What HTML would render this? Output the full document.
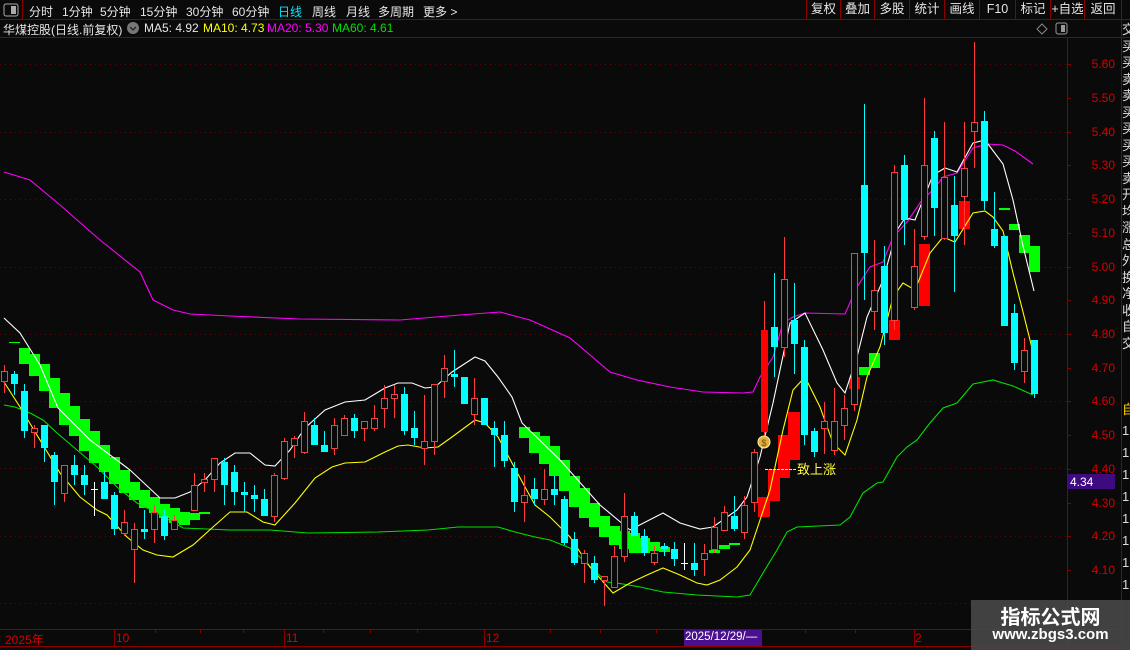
<!DOCTYPE html>
<html><head><meta charset="utf-8"><style>
*{margin:0;padding:0;box-sizing:border-box}
body{width:1130px;height:650px;background:#0a0a0a;overflow:hidden;position:relative;font-family:"Liberation Sans","Noto Sans CJK SC",sans-serif;color:#e6e6e6;font-size:12px}
.a{position:absolute;white-space:nowrap}
.top span{position:absolute;top:3px}
.btn{position:absolute;top:0;height:19px;border-left:1px solid #8a0000;text-align:center;line-height:19px;font-size:12.5px}
.ax{position:absolute;right:15px;color:#d40000;font-size:12px}
.rs{position:absolute;left:1122px;width:8px;overflow:hidden;font-size:13px;line-height:16.5px;color:#ddd}
</style></head><body>
<svg class="a" style="left:0;top:0" width="1130" height="650">
<!-- grid -->
<g stroke="#6a0000" stroke-dasharray="1,4" stroke-width="1">
<path d="M0 64.5H1067M0 132.5H1067M0 199.5H1067M0 267.5H1067M0 334.5H1067M0 401.5H1067M0 468.5H1067M0 536.5H1067M0 603.5H1067"/>
</g>
<!-- frame lines -->
<g stroke="#8a0000" stroke-width="1" fill="none">
<path d="M0 19.5H1130M0 37.5H1130M1067.5 37V646M1121.5 19V646M0 629.5H1121M0 646.5H1130M22.5 0V19"/>
<path d="M1067 64.5h4M1067 98.5h4M1067 132.5h4M1067 165.5h4M1067 199.5h4M1067 233.5h4M1067 267.5h4M1067 300.5h4M1067 334.5h4M1067 368.5h4M1067 401.5h4M1067 435.5h4M1067 469.5h4M1067 503.5h4M1067 536.5h4M1067 570.5h4"/>
<path d="M114.5 630v16M284.5 630v16M484.5 630v16M914.5 630v16M155.5 630v3M200.5 630v3M243.5 630v3M323.5 630v3M370.5 630v3M417.5 630v3M550.5 630v3M600.5 630v3M656.5 630v3M805.5 630v3M855.5 630v3M1000.5 630v3"/>
</g>
<!-- green band 1 -->
<g fill="#00ff00">
<rect x="19" y="348" width="11" height="16"/><rect x="29" y="354" width="11" height="22"/><rect x="39" y="364" width="11" height="27"/><rect x="49" y="378" width="11" height="30"/><rect x="59" y="393" width="11" height="32"/><rect x="69" y="406" width="11" height="30"/><rect x="79" y="419" width="11" height="32"/><rect x="89" y="431" width="11" height="32"/><rect x="99" y="445" width="11" height="27"/><rect x="109" y="457" width="11" height="27"/><rect x="119" y="470" width="11" height="23"/><rect x="129" y="482" width="11" height="18"/><rect x="139" y="490" width="11" height="18"/><rect x="149" y="497" width="11" height="16"/><rect x="159" y="504" width="11" height="14"/><rect x="169" y="508" width="11" height="15"/><rect x="179" y="512" width="11" height="13"/><rect x="189" y="513" width="11" height="7"/><rect x="199" y="512" width="11" height="2"/>
<rect x="9" y="342" width="11" height="1"/>
<!-- band 2 -->
<rect x="519" y="427" width="11" height="11"/><rect x="529" y="432" width="11" height="21"/><rect x="539" y="436" width="11" height="28"/><rect x="549" y="446" width="11" height="30"/><rect x="559" y="460" width="11" height="31"/><rect x="569" y="476" width="11" height="31"/><rect x="579" y="488" width="11" height="30"/><rect x="589" y="503" width="11" height="24"/><rect x="599" y="516" width="11" height="21"/><rect x="609" y="526" width="11" height="19"/><rect x="619" y="531" width="11" height="18"/><rect x="629" y="533" width="11" height="20"/><rect x="639" y="538" width="11" height="15"/><rect x="649" y="542" width="11" height="9"/><rect x="659" y="547" width="11" height="5"/>
<rect x="709" y="550" width="11" height="3"/><rect x="719" y="545" width="11" height="4"/><rect x="729" y="543" width="11" height="2"/>
<rect x="859" y="367" width="11" height="8"/><rect x="869" y="353" width="11" height="15"/>
<rect x="999" y="208" width="11" height="2"/><rect x="1009" y="224" width="11" height="6"/><rect x="1019" y="235" width="11" height="18"/><rect x="1029" y="246" width="11" height="26"/>
</g>
<!-- red blocks -->
<g fill="#ff0000">
<rect x="758" y="497" width="12" height="20"/><rect x="768" y="469" width="12" height="32"/><rect x="778" y="435" width="12" height="43"/><rect x="788" y="412" width="12" height="48"/><rect x="849" y="377" width="11" height="12"/><rect x="889" y="320" width="11" height="20"/><rect x="919" y="244" width="11" height="62"/><rect x="959" y="201" width="11" height="28"/>
</g>
<!-- MA lines -->
<g fill="none" stroke-width="1.1">
<polyline stroke="#ff00ff" points="4,172 30,180 60,205 100,240 140,272 153,300 173,310 190,314 230,316 300,319 400,320 460,315 500,312 530,320 570,338 610,372 637,380 670,387 703,392 743,393 753,392 760,377 773,357 783,323 793,317 805,313 845,314 857,287 870,267 883,262 893,237 907,222 922,200 933,190 943,177 957,173 973,148 987,144 1003,145 1015,151 1033,164"/>
<polyline stroke="#00e000" points="4,405 15,407 30,413 43,420 57,433 77,450 97,467 117,487 137,503 157,513 183,528 230,530 270,530 308,533 378,532 428,530 458,527 498,527 515,532 535,537 550,540 570,548 583,560 597,573 607,582 623,584 640,587 663,592 697,595 737,597 750,595 763,573 777,550 787,532 797,527 840,525 850,517 863,493 877,483 883,482 897,457 907,447 917,440 930,423 943,408 957,403 973,384 993,380 1013,386 1033,395"/>
<polyline stroke="#ffff00" points="4,382 20,407 40,440 60,473 80,497 97,510 107,515 127,537 143,550 157,555 173,557 193,545 213,527 230,512 247,512 263,522 275,525 295,503 315,478 332,467 345,463 365,462 385,452 398,446 408,445 425,448 438,447 452,437 475,420 485,423 498,437 512,463 525,487 535,505 550,517 570,537 590,567 613,593 630,583 647,575 663,568 680,575 697,583 707,585 720,580 737,567 750,550 760,520 770,490 783,430 793,390 805,377 820,407 833,443 845,455 857,420 867,377 880,347 893,297 903,283 915,290 930,253 943,237 955,242 973,213 985,211 993,217 1003,231 1013,273 1023,312 1034,356"/>
<polyline stroke="#ffffff" points="4,318 20,333 40,365 58,408 90,440 130,470 160,498 175,498 190,492 205,480 220,463 235,453 250,453 265,465 275,466 290,450 305,428 325,410 345,402 365,400 385,388 398,383 412,383 425,388 435,387 452,372 475,357 485,361 498,377 512,397 522,423 560,460 600,505 630,530 663,513 680,523 700,529 713,527 737,510 747,497 760,457 773,403 790,323 805,313 823,350 837,383 845,393 857,357 867,317 883,280 897,230 905,218 915,220 933,175 945,168 957,172 973,143 985,140 1003,164 1013,200 1023,246 1034,291"/>
</g>
<!-- wicks -->
<path stroke="#ff3b3b" stroke-width="1" d="M4.5 365V393M34.5 425V448M64.5 465V502M124.5 510V536M134.5 523V583M154.5 505V543M174.5 515V530M194.5 473V510M204.5 473V492M214.5 458V492M274.5 473V522M284.5 438V480M294.5 436V458M304.5 412V454M334.5 418V455M344.5 415V435M364.5 421V441M374.5 405V431M384.5 385V428M394.5 385V418M424.5 395V465M434.5 384V455M444.5 355V398M474.5 378V425M524.5 475V522M544.5 469V505M584.5 550V583M604.5 576V606M614.5 546V587M624.5 493V562M654.5 546V565M704.5 544V576M714.5 517V553M724.5 506V531M744.5 496V539M754.5 449V512M764.5 301V442M784.5 237V357M824.5 402V454M834.5 388V455M844.5 395V440M854.5 253V411M874.5 240V330M894.5 165V330M914.5 229V310M924.5 98V240M944.5 122V240M964.5 122V245M974.5 42V168M1024.5 338V383"/>
<path stroke="#00ffff" stroke-width="1" d="M14.5 371V395M24.5 384V438M44.5 425V462M54.5 452V505M74.5 455V485M84.5 465V495M104.5 471V499M114.5 492V535M144.5 510V539M164.5 510V540M224.5 458V505M234.5 465V505M244.5 482V512M254.5 485V512M264.5 489V516M314.5 418V445M324.5 431V452M354.5 414V438M404.5 387V435M414.5 411V445M454.5 350V387M494.5 421V467M504.5 421V467M514.5 462V512M534.5 478V505M554.5 476V505M564.5 496V545M574.5 532V565M594.5 556V583M634.5 512V536M644.5 529V556M664.5 543V556M674.5 542V566M694.5 543V576M734.5 496V531M774.5 273V377M794.5 283V374M804.5 340V445M814.5 428V457M864.5 104V300M884.5 246V345M904.5 155V245M934.5 131V236M954.5 176V292M984.5 111V210M994.5 192V248M1014.5 304V370M1034.5 340V398"/>
<path stroke="#ffffff" stroke-width="1" d="M94.5 482V516M91 489.5h7M684.5 543V570M681 563.5h7"/>
<!-- cyan bodies -->
<g fill="#00ffff">
<rect x="11" y="374" width="7" height="10"/><rect x="21" y="391" width="7" height="40"/><rect x="41" y="425" width="7" height="23"/><rect x="51" y="455" width="7" height="27"/><rect x="71" y="465" width="7" height="10"/><rect x="81" y="475" width="7" height="10"/><rect x="101" y="482" width="7" height="17"/><rect x="111" y="495" width="7" height="34"/><rect x="141" y="529" width="7" height="3"/><rect x="161" y="516" width="7" height="20"/><rect x="221" y="462" width="7" height="23"/><rect x="231" y="472" width="7" height="20"/><rect x="241" y="492" width="7" height="3"/><rect x="251" y="495" width="7" height="4"/><rect x="261" y="499" width="7" height="17"/><rect x="311" y="425" width="7" height="20"/><rect x="321" y="445" width="7" height="7"/><rect x="351" y="418" width="7" height="13"/><rect x="401" y="394" width="7" height="37"/><rect x="411" y="428" width="7" height="10"/><rect x="451" y="374" width="7" height="3"/><rect x="461" y="377" width="7" height="27"/><rect x="481" y="398" width="7" height="27"/><rect x="491" y="428" width="7" height="7"/><rect x="501" y="435" width="7" height="26"/><rect x="511" y="468" width="7" height="34"/><rect x="531" y="489" width="7" height="10"/><rect x="551" y="489" width="7" height="6"/><rect x="561" y="499" width="7" height="44"/><rect x="571" y="539" width="7" height="24"/><rect x="591" y="563" width="7" height="17"/><rect x="631" y="516" width="7" height="20"/><rect x="641" y="536" width="7" height="17"/><rect x="661" y="546" width="7" height="3"/><rect x="671" y="549" width="7" height="10"/><rect x="691" y="563" width="7" height="7"/><rect x="731" y="516" width="7" height="13"/><rect x="771" y="327" width="7" height="20"/><rect x="791" y="320" width="7" height="24"/><rect x="801" y="347" width="7" height="88"/><rect x="811" y="431" width="7" height="21"/><rect x="861" y="185" width="7" height="68"/><rect x="881" y="266" width="7" height="67"/><rect x="901" y="165" width="7" height="55"/><rect x="931" y="138" width="7" height="70"/><rect x="951" y="205" width="7" height="31"/><rect x="981" y="121" width="7" height="80"/><rect x="991" y="229" width="7" height="17"/><rect x="1001" y="236" width="7" height="90"/><rect x="1011" y="313" width="7" height="50"/><rect x="1031" y="340" width="7" height="54"/>
</g>
<!-- red hollow bodies -->
<g fill="#0a0a0a" stroke="#ff3b3b" stroke-width="1">
<rect x="1.5" y="371.5" width="6" height="10"/><rect x="31.5" y="428.5" width="6" height="4"/><rect x="61.5" y="465.5" width="6" height="28"/><rect x="121.5" y="522.5" width="6" height="11"/><rect x="131.5" y="529.5" width="6" height="20"/><rect x="151.5" y="512.5" width="6" height="17"/><rect x="171.5" y="520.5" width="6" height="9"/><rect x="191.5" y="485.5" width="6" height="25"/><rect x="201.5" y="479.5" width="6" height="3"/><rect x="211.5" y="458.5" width="6" height="21"/><rect x="271.5" y="475.5" width="6" height="41"/><rect x="281.5" y="441.5" width="6" height="37"/><rect x="291.5" y="438.5" width="6" height="7"/><rect x="301.5" y="421.5" width="6" height="31"/><rect x="331.5" y="425.5" width="6" height="23"/><rect x="341.5" y="418.5" width="6" height="17"/><rect x="361.5" y="421.5" width="6" height="7"/><rect x="371.5" y="418.5" width="6" height="10"/><rect x="381.5" y="398.5" width="6" height="10"/><rect x="391.5" y="394.5" width="6" height="4"/><rect x="421.5" y="441.5" width="6" height="7"/><rect x="431.5" y="384.5" width="6" height="57"/><rect x="441.5" y="368.5" width="6" height="13"/><rect x="471.5" y="398.5" width="6" height="16"/><rect x="521.5" y="495.5" width="6" height="7"/><rect x="541.5" y="489.5" width="6" height="10"/><rect x="581.5" y="553.5" width="6" height="10"/><rect x="601.5" y="576.5" width="6" height="4"/><rect x="611.5" y="556.5" width="6" height="31"/><rect x="621.5" y="516.5" width="6" height="40"/><rect x="651.5" y="553.5" width="6" height="9"/><rect x="701.5" y="553.5" width="6" height="6"/><rect x="711.5" y="527.5" width="6" height="22"/><rect x="721.5" y="512.5" width="6" height="18"/><rect x="741.5" y="505.5" width="6" height="27"/><rect x="751.5" y="452.5" width="6" height="50"/><rect x="781.5" y="279.5" width="6" height="68"/><rect x="821.5" y="421.5" width="6" height="7"/><rect x="831.5" y="421.5" width="6" height="29"/><rect x="841.5" y="408.5" width="6" height="17"/><rect x="851.5" y="253.5" width="6" height="151"/><rect x="871.5" y="290.5" width="6" height="21"/><rect x="891.5" y="172.5" width="6" height="148"/><rect x="911.5" y="266.5" width="6" height="41"/><rect x="921.5" y="165.5" width="6" height="71"/><rect x="941.5" y="177.5" width="6" height="61"/><rect x="961.5" y="168.5" width="6" height="28"/><rect x="971.5" y="122.5" width="6" height="9"/><rect x="1021.5" y="350.5" width="6" height="21"/>
</g>
<rect x="761" y="330" width="7" height="102" fill="#ff0000"/>
<!-- money bag -->
<circle cx="764" cy="442" r="6" fill="#e0b040" stroke="#fff2a0" stroke-width="1"/>
<text x="764" y="446" font-size="9" text-anchor="middle" fill="#7a4a00" font-family="Liberation Sans">$</text>
<path d="M765 469.5H796" stroke="#ffff00" stroke-dasharray="3,1"/>
<text x="797" y="474" font-size="13" fill="#ffff40" font-family="Liberation Sans,Noto Sans CJK SC,sans-serif">致上涨</text>
<!-- top-left icons -->
<rect x="4" y="4" width="14" height="12" rx="2" fill="none" stroke="#aaa"/><rect x="11" y="6" width="5" height="8" fill="#aaa"/>
<rect x="1056" y="23" width="11" height="11" rx="2" fill="none" stroke="#999"/><rect x="1061" y="25" width="4" height="7" fill="#999"/>
<path d="M1042 24l5 5-5 5-5-5z" fill="none" stroke="#888"/>
<circle cx="133" cy="28" r="6" fill="#777"/><path d="M130 27l3 3 3-3" stroke="#222" fill="none" stroke-width="1.3"/>
<rect x="684" y="630" width="78" height="16" fill="#4a1090"/>
<rect x="1068" y="474" width="47" height="15" fill="#3d0a80"/>
</svg>
<div class="top">
<span style="left:29px">分时</span><span style="left:62px">1分钟</span><span style="left:100px">5分钟</span><span style="left:140px">15分钟</span><span style="left:186px">30分钟</span><span style="left:232px">60分钟</span><span style="left:278px;color:#00e8ff">日线</span><span style="left:312px">周线</span><span style="left:346px">月线</span><span style="left:378px">多周期</span><span style="left:423px">更多 &gt;</span>
</div>
<div class="btn" style="left:806px;width:34px">复权</div><div class="btn" style="left:840px;width:34px">叠加</div><div class="btn" style="left:874px;width:35px">多股</div><div class="btn" style="left:909px;width:35px">统计</div><div class="btn" style="left:944px;width:35px">画线</div><div class="btn" style="left:979px;width:36px">F10</div><div class="btn" style="left:1015px;width:35px">标记</div><div class="btn" style="left:1050px;width:34px">+自选</div><div class="btn" style="left:1084px;width:38px;border-right:1px solid #8a0000">返回</div>
<div class="a" style="left:3px;top:21px">华煤控股(日线.前复权)</div>
<div class="a" style="left:144px;top:21px">MA5: 4.92</div>
<div class="a" style="left:203px;top:21px;color:#ffff00">MA10: 4.73</div>
<div class="a" style="left:267px;top:21px;color:#ff00ff">MA20: 5.30</div>
<div class="a" style="left:332px;top:21px;color:#00e000">MA60: 4.61</div>
<div class="ax" style="top:57px">5.60</div><div class="ax" style="top:91px">5.50</div><div class="ax" style="top:125px">5.40</div><div class="ax" style="top:158px">5.30</div><div class="ax" style="top:192px">5.20</div><div class="ax" style="top:226px">5.10</div><div class="ax" style="top:260px">5.00</div><div class="ax" style="top:293px">4.90</div><div class="ax" style="top:327px">4.80</div><div class="ax" style="top:361px">4.70</div><div class="ax" style="top:394px">4.60</div><div class="ax" style="top:428px">4.50</div><div class="ax" style="top:462px">4.40</div><div class="ax" style="top:496px">4.30</div><div class="ax" style="top:529px">4.20</div><div class="ax" style="top:563px">4.10</div>
<div class="a" style="left:1070px;top:475px;color:#fff">4.34</div>
<div class="a" style="left:5px;top:631px;color:#d40000">2025年</div>
<div class="a" style="left:116px;top:631px;color:#d40000">10</div>
<div class="a" style="left:286px;top:631px;color:#d40000">11</div>
<div class="a" style="left:486px;top:631px;color:#d40000">12</div>
<div class="a" style="left:685px;top:631px;color:#fff;font-size:11.5px">2025/12/29/—</div>
<div class="a" style="left:915px;top:631px;color:#d40000">2</div>
<div class="rs" style="top:22px;height:380px">交<br>买<br>买<br>卖<br>卖<br>买<br>买<br>买<br>买<br>卖<br>开<br>均<br>涨<br>总<br>外<br>换<br>净<br>收<br>自<br>交</div>
<div class="rs" style="top:402px;color:#ffd000">自</div>
<div class="rs" style="top:420px;height:180px;line-height:22px">1<br>1<br>1<br>1<br>1<br>1<br>1<br>1</div>
<div class="a" style="left:971px;top:600px;width:159px;height:50px;background:rgba(70,70,70,0.92)"></div>
<div class="a" style="left:971px;top:601px;width:159px;text-align:center;font-size:20px;font-weight:bold;color:#fff">指标公式网</div>
<div class="a" style="left:971px;top:626px;width:159px;text-align:center;font-size:15px;font-weight:bold;color:#fff">www.zbgs3.com</div>
</body></html>
